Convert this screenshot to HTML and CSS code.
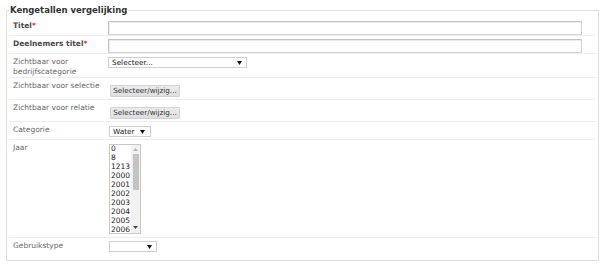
FILE: index.html
```html
<!DOCTYPE html>
<html lang="nl">
<head>
<meta charset="utf-8">
<title>Kengetallen vergelijking</title>
<link rel="stylesheet" href="styles.css">
</head>
<body>
<fieldset class="panel">
  <legend class="panel-title">Kengetallen vergelijking</legend>

  <div class="row">
    <div class="label req">Titel<span class="star">*</span></div>
    <div class="field"><input class="text" type="text"></div>
  </div>

  <div class="row">
    <div class="label req">Deelnemers titel<span class="star">*</span></div>
    <div class="field"><input class="text" type="text"></div>
  </div>

  <div class="row">
    <div class="label">Zichtbaar voor<br>bedrijfscategorie</div>
    <div class="field">
      <div class="select select-wide"><span class="sel-text">Selecteer...</span><svg class="arrow" width="5" height="4" viewBox="0 0 5 4"><polygon points="0,0 5,0 2.5,4" fill="#111"/></svg></div>
    </div>
  </div>

  <div class="row">
    <div class="label">Zichtbaar voor selectie</div>
    <div class="field"><button class="btn" type="button">Selecteer/wijzig...</button></div>
  </div>

  <div class="row">
    <div class="label">Zichtbaar voor relatie</div>
    <div class="field"><button class="btn" type="button">Selecteer/wijzig...</button></div>
  </div>

  <div class="row">
    <div class="label">Categorie</div>
    <div class="field">
      <div class="select select-cat"><span class="sel-text">Water</span><svg class="arrow" width="5" height="4" viewBox="0 0 5 4"><polygon points="0,0 5,0 2.5,4" fill="#111"/></svg></div>
    </div>
  </div>

  <div class="row">
    <div class="label">Jaar</div>
    <div class="field">
      <div class="listbox">
        <ul class="options">
          <li>0</li><li>8</li><li>1213</li><li>2000</li><li>2001</li><li>2002</li>
          <li>2003</li><li>2004</li><li>2005</li><li>2006</li>
        </ul>
        <div class="scrollbar">
          <svg class="sb-up" width="5" height="3" viewBox="0 0 5 3"><polygon points="0,3 5,3 2.5,0" fill="#b4b4b4"/></svg>
          <div class="sb-thumb"></div>
          <svg class="sb-down" width="5" height="3" viewBox="0 0 5 3"><polygon points="0,0 5,0 2.5,3" fill="#444"/></svg>
        </div>
      </div>
    </div>
  </div>

  <div class="row last">
    <div class="label">Gebruikstype</div>
    <div class="field">
      <div class="select select-type"><span class="sel-text"></span><svg class="arrow" width="5" height="4" viewBox="0 0 5 4"><polygon points="0,0 5,0 2.5,4" fill="#111"/></svg></div>
    </div>
  </div>
</fieldset>
</body>
</html>
```
FILE: styles.css
```css
html, body {
  margin: 0;
  padding: 0;
  background: #ffffff;
}

body {
  font-family: "DejaVu Sans", Verdana, sans-serif;
  width: 600px;
  height: 268px;
  overflow: hidden;
}

.panel {
  margin: 5px 1px 0 6px;
  padding: 2px 2px 5px 2px;
  border: 1px solid #dedede;
  min-width: 0;
}

.panel-title {
  padding: 0 1px;
  font-size: 8.5px;
  line-height: 11px;
  font-weight: bold;
  color: #333;
}

.row {
  display: grid;
  grid-template-columns: 100px 1fr;
  padding-top: 3px;
  border-bottom: 1px solid #ededed;
}

.row.last {
  border-bottom: none;
}

.label {
  padding-left: 4px;
  font-size: 7.5px;
  line-height: 10px;
  color: #666;
}

.label.req {
  font-weight: bold;
  color: #4a4a4a;
}

.star {
  color: #e03030;
}

.field {
  display: flex;
  align-items: flex-start;
}

.text {
  display: block;
  box-sizing: border-box;
  width: 474px;
  height: 14px;
  margin: 0 0 0 -1px;
  padding: 0;
  border: 1px solid;
  border-color: #c4c4c4 #d2d2d2 #d2d2d2 #c4c4c4;
  box-shadow: inset 1px 1px 0 #ededed;
  background: #fff;
}

.select {
  box-sizing: border-box;
  height: 11px;
  display: flex;
  align-items: center;
  justify-content: space-between;
  padding: 0 4px 0 3px;
  border: 1px solid #cfcfcf;
  background: #fff;
  font-size: 7.3px;
  color: #222;
}

.select-wide {
  width: 139px;
  margin-left: -1px;
}

.select-cat {
  width: 42px;
  margin-top: 1px;
  margin-bottom: 2px;
  padding-right: 5px;
}

.select-type {
  width: 48px;
  margin-bottom: 3px;
  padding-right: 4px;
}

.arrow {
  display: block;
  flex: none;
}

.btn {
  box-sizing: border-box;
  width: 70px;
  height: 12px;
  margin: 4px 0 2px 1px;
  padding: 0;
  border: 1px solid #d3d3d3;
  border-radius: 1px;
  background: linear-gradient(#ececec, #dedede);
  font-family: "DejaVu Sans", Verdana, sans-serif;
  font-size: 7.2px;
  line-height: 10px;
  color: #333;
}

.listbox {
  box-sizing: border-box;
  width: 32px;
  height: 90px;
  margin: 1px 0 3px 0;
  border: 1px solid #c8c8c8;
  display: flex;
  overflow: hidden;
  background: #fff;
}

.options {
  list-style: none;
  margin: -1px 0 0 0;
  padding: 0 0 0 1px;
  flex: 1;
  font-size: 7.5px;
  line-height: 9px;
  color: #222;
}

.scrollbar {
  width: 9px;
  flex: none;
  background: #f1f1f1;
  display: flex;
  flex-direction: column;
  align-items: center;
}

.sb-up {
  margin-top: 3px;
}

.sb-thumb {
  width: 6px;
  height: 36px;
  margin-top: 3px;
  background: #c4c4c4;
}

.sb-down {
  margin-top: auto;
  margin-bottom: 4px;
}
```
